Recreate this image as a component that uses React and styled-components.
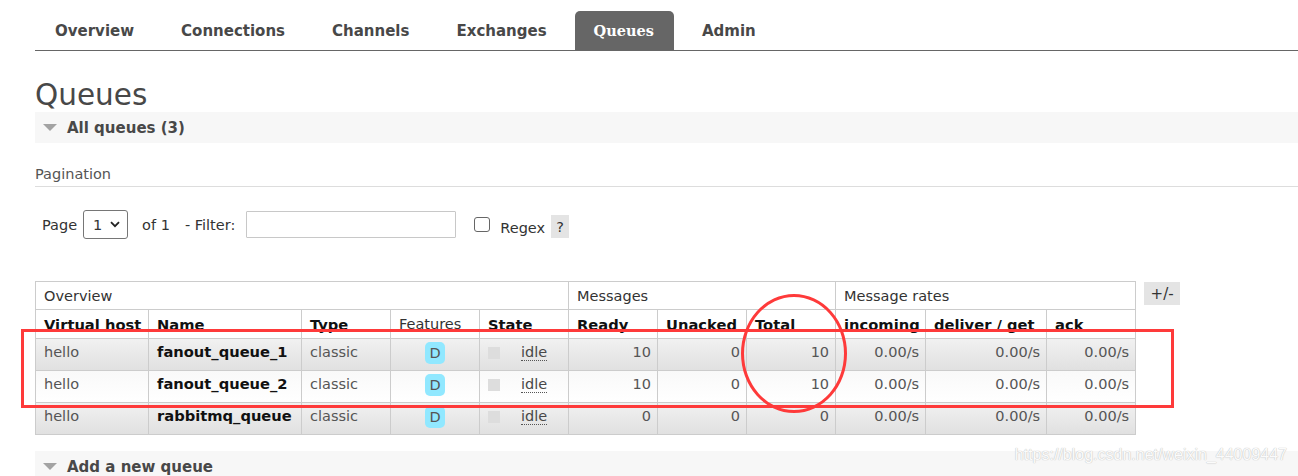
import React from "react";
import styled, { createGlobalStyle, css } from "styled-components";

const GlobalStyle = createGlobalStyle`
  html, body { margin: 0; padding: 0; background: #fff; }
  body {
    font-family: "DejaVu Sans", Verdana, sans-serif;
    color: #484848;
    overflow: hidden;
  }
  * { box-sizing: border-box; }
`;

const Page = styled.div`
  position: relative;
  width: 1298px;
  height: 476px;
  overflow: hidden;
`;

const Main = styled.div`
  padding-left: 35px;
`;

const Nav = styled.ul`
  display: flex;
  list-style: none;
  margin: 0;
  padding: 11px 0 0 1px;
  border-bottom: 1px solid #666;
`;

const Tab = styled.li`
  height: 39px;
  padding: 0 19px;
  margin-right: 9px;
  display: flex;
  align-items: center;
  font-size: 15px;
  font-weight: bold;
  color: #484848;
  border-radius: 5px 5px 0 0;
  ${(p) =>
    p.$active &&
    css`
      background: #666;
      color: #fff;
      font-family: "DejaVu Serif", Georgia, serif;
      font-size: 14.5px;
      padding: 0 20px 0 19px;
    `}
`;

const Title = styled.h1`
  margin: 28px 0 0;
  font-size: 29.5px;
  line-height: 33px;
  font-weight: normal;
  color: #484848;
`;

const SectionBar = styled.div`
  height: 31px;
  background: #f7f7f7;
  display: flex;
  align-items: center;
  gap: 10px;
  padding-left: 8px;
  font-size: 15px;
  font-weight: bold;
  color: #484848;
  margin-top: ${(p) => p.$mt || 0}px;
`;

const Triangle = styled.span`
  width: 0;
  height: 0;
  border-left: 7px solid transparent;
  border-right: 7px solid transparent;
  border-top: 7px solid #a3a3a3;
`;

const SubTitle = styled.div`
  margin-top: 21px;
  font-size: 14.5px;
  line-height: 20px;
  padding-bottom: 2px;
  border-bottom: 1px solid #ddd;
  color: #555;
`;

const Controls = styled.div`
  margin-top: 23px;
  height: 29px;
  display: flex;
  align-items: center;
  padding-left: 7px;
  font-size: 14.5px;
  color: #333;
`;

const Label = styled.span`
  margin-left: ${(p) => p.$ml || 0}px;
  margin-top: ${(p) => p.$mt || 0}px;
`;

const SelectWrap = styled.div`
  position: relative;
  margin-left: 6px;
  width: 45px;
  height: 29px;
`;

const Select = styled.select`
  appearance: none;
  width: 100%;
  height: 100%;
  border: 1px solid #767676;
  border-radius: 3px;
  background: #fff;
  font-family: "DejaVu Sans", Verdana, sans-serif;
  font-size: 14.5px;
  color: #333;
  padding: 0 0 0 9px;
`;

const Chevron = styled.svg`
  position: absolute;
  right: 8px;
  top: 11px;
  pointer-events: none;
`;

const FilterInput = styled.input`
  margin-left: 11px;
  width: 210px;
  height: 27px;
  border: 1px solid #c8c8c8;
  border-radius: 1px;
  background: #fff;
`;

const Check = styled.input`
  appearance: none;
  margin: 0 0 0 18px;
  width: 16px;
  height: 15px;
  border: 1px solid #666;
  border-radius: 3px;
  background: #fff;
`;

const Help = styled.span`
  margin-left: 6px;
  margin-top: 4px;
  width: 18px;
  height: 23px;
  background: #e4e4e4;
  display: flex;
  align-items: center;
  justify-content: center;
  font-size: 14.5px;
  color: #333;
`;

const TableRow = styled.div`
  margin-top: 42px;
  display: flex;
  align-items: flex-start;
  gap: 8px;
`;

const Table = styled.table`
  width: 1101px;
  table-layout: fixed;
  border-collapse: collapse;
  font-size: 14.5px;
`;

const HeadRow = styled.tr`
  height: ${(p) => p.$h}px;
  background: #fff;
`;

const GroupTh = styled.th`
  border: 1px solid #ccc;
  text-align: left;
  font-weight: normal;
  color: #333;
  padding: 0 8px;
  white-space: nowrap;
`;

const ColTh = styled.th`
  border: 1px solid #ccc;
  text-align: left;
  font-weight: ${(p) => (p.$plain ? "normal" : "bold")};
  font-size: ${(p) => (p.$plain ? "14.5px" : "14.7px")};
  color: ${(p) => (p.$plain ? "#333" : "#111")};
  padding: 0 8px;
  white-space: nowrap;
  overflow: hidden;
`;

const DataRow = styled.tr`
  height: 32px;
  background: ${(p) =>
    p.$alt
      ? "linear-gradient(#f9f9f9, #ffffff)"
      : "linear-gradient(#f1f1f1, #e0e0e0)"};
`;

const Td = styled.td`
  border: 1px solid #ccc;
  padding: ${(p) => (p.$right ? "0 6px 5px 8px" : "0 8px 5px")};
  text-align: ${(p) => (p.$right ? "right" : p.$center ? "center" : "left")};
  color: ${(p) => (p.$strong ? "#111" : "#555")};
  font-weight: ${(p) => (p.$strong ? "bold" : "normal")};
  font-size: ${(p) => (p.$strong ? "14.7px" : "14.5px")};
  line-height: 20px;
  white-space: nowrap;
  overflow: hidden;
  vertical-align: middle;
`;

const Badge = styled.span`
  display: inline-flex;
  align-items: center;
  justify-content: center;
  vertical-align: middle;
  width: 20px;
  height: 22px;
  margin-top: 2px;
  border-radius: 5px;
  background: #91e8ff;
  color: #555;
  font-size: 14.5px;
`;

const StateCell = styled.div`
  display: flex;
  align-items: center;
`;

const StateDot = styled.span`
  width: 12px;
  height: 12px;
  margin-top: 1px;
  background: #ddd;
  flex: none;
`;

const StateText = styled.span`
  flex: 1;
  text-align: center;
  padding-left: 8px;
  color: #484848;
  & > abbr {
    text-decoration: none;
    border-bottom: 1px dotted #555;
  }
`;

const ToggleBtn = styled.span`
  margin-top: 1px;
  width: 36px;
  height: 23px;
  background: #e4e4e4;
  display: flex;
  align-items: center;
  justify-content: center;
  font-size: 15px;
  color: #333;
`;

const RedRect = styled.div`
  position: absolute;
  left: 21px;
  top: 329px;
  width: 1153px;
  height: 79px;
  border: 3px solid #fe3a3a;
  pointer-events: none;
`;

const RedEllipse = styled.div`
  position: absolute;
  left: 741px;
  top: 294px;
  width: 106px;
  height: 119px;
  border: 3px solid #fe3a3a;
  border-radius: 50%;
  pointer-events: none;
`;

const Watermark = styled.div`
  position: absolute;
  right: 11px;
  top: 446px;
  font-family: "Liberation Sans", Arial, sans-serif;
  font-size: 16px;
  color: #fbfbfb;
  text-shadow: 0 0 1px #bdbdbd, 0 0 1px #cfcfcf;
  pointer-events: none;
`;

const tabs = ["Overview", "Connections", "Channels", "Exchanges", "Queues", "Admin"];

const columns = [
  { label: "Virtual host", w: 113 },
  { label: "Name", w: 153 },
  { label: "Type", w: 89 },
  { label: "Features", w: 89, plain: true },
  { label: "State", w: 89 },
  { label: "Ready", w: 89 },
  { label: "Unacked", w: 89 },
  { label: "Total", w: 89 },
  { label: "incoming", w: 90 },
  { label: "deliver / get", w: 121 },
  { label: "ack", w: 89 },
];

const groups = [
  { label: "Overview", span: 5 },
  { label: "Messages", span: 3 },
  { label: "Message rates", span: 3 },
];

const queues = [
  { vhost: "hello", name: "fanout_queue_1", ready: 10, unacked: 0, total: 10 },
  { vhost: "hello", name: "fanout_queue_2", ready: 10, unacked: 0, total: 10 },
  { vhost: "hello", name: "rabbitmq_queue", ready: 0, unacked: 0, total: 0 },
];

export default function App() {
  return (
    <Page>
      <GlobalStyle />
      <Main>
        <Nav>
          {tabs.map((t) => (
            <Tab key={t} $active={t === "Queues"}>
              {t}
            </Tab>
          ))}
        </Nav>
        <Title>Queues</Title>
        <SectionBar>
          <Triangle />
          All queues (3)
        </SectionBar>
        <SubTitle>Pagination</SubTitle>
        <Controls>
          <Label>Page</Label>
          <SelectWrap>
            <Select defaultValue="1">
              <option value="1">1</option>
            </Select>
            <Chevron width="10" height="7" viewBox="0 0 10 7">
              <path d="M1 1.2 L5 5.2 L9 1.2" fill="none" stroke="#222" strokeWidth="1.8" />
            </Chevron>
          </SelectWrap>
          <Label $ml={14}>of 1</Label>
          <Label $ml={15}>- Filter:</Label>
          <FilterInput type="text" />
          <Check type="checkbox" />
          <Label $ml={10} $mt={6}>Regex</Label>
          <Help>?</Help>
        </Controls>
        <TableRow>
          <Table>
            <colgroup>
              {columns.map((c) => (
                <col key={c.label} style={{ width: c.w }} />
              ))}
            </colgroup>
            <thead>
              <HeadRow $h={28}>
                {groups.map((g) => (
                  <GroupTh key={g.label} colSpan={g.span}>
                    {g.label}
                  </GroupTh>
                ))}
              </HeadRow>
              <HeadRow $h={29}>
                {columns.map((c) => (
                  <ColTh key={c.label} $plain={c.plain}>
                    {c.label}
                  </ColTh>
                ))}
              </HeadRow>
            </thead>
            <tbody>
              {queues.map((q, i) => (
                <DataRow key={q.name} $alt={i % 2 === 1}>
                  <Td>{q.vhost}</Td>
                  <Td $strong>{q.name}</Td>
                  <Td>classic</Td>
                  <Td $center>
                    <Badge>D</Badge>
                  </Td>
                  <Td>
                    <StateCell>
                      <StateDot />
                      <StateText>
                        <abbr>idle</abbr>
                      </StateText>
                    </StateCell>
                  </Td>
                  <Td $right>{q.ready}</Td>
                  <Td $right>{q.unacked}</Td>
                  <Td $right>{q.total}</Td>
                  <Td $right>0.00/s</Td>
                  <Td $right>0.00/s</Td>
                  <Td $right>0.00/s</Td>
                </DataRow>
              ))}
            </tbody>
          </Table>
          <ToggleBtn>+/-</ToggleBtn>
        </TableRow>
        <SectionBar $mt={16}>
          <Triangle />
          Add a new queue
        </SectionBar>
      </Main>
      <RedRect />
      <RedEllipse />
      <Watermark>https://blog.csdn.net/weixin_44009447</Watermark>
    </Page>
  );
}
